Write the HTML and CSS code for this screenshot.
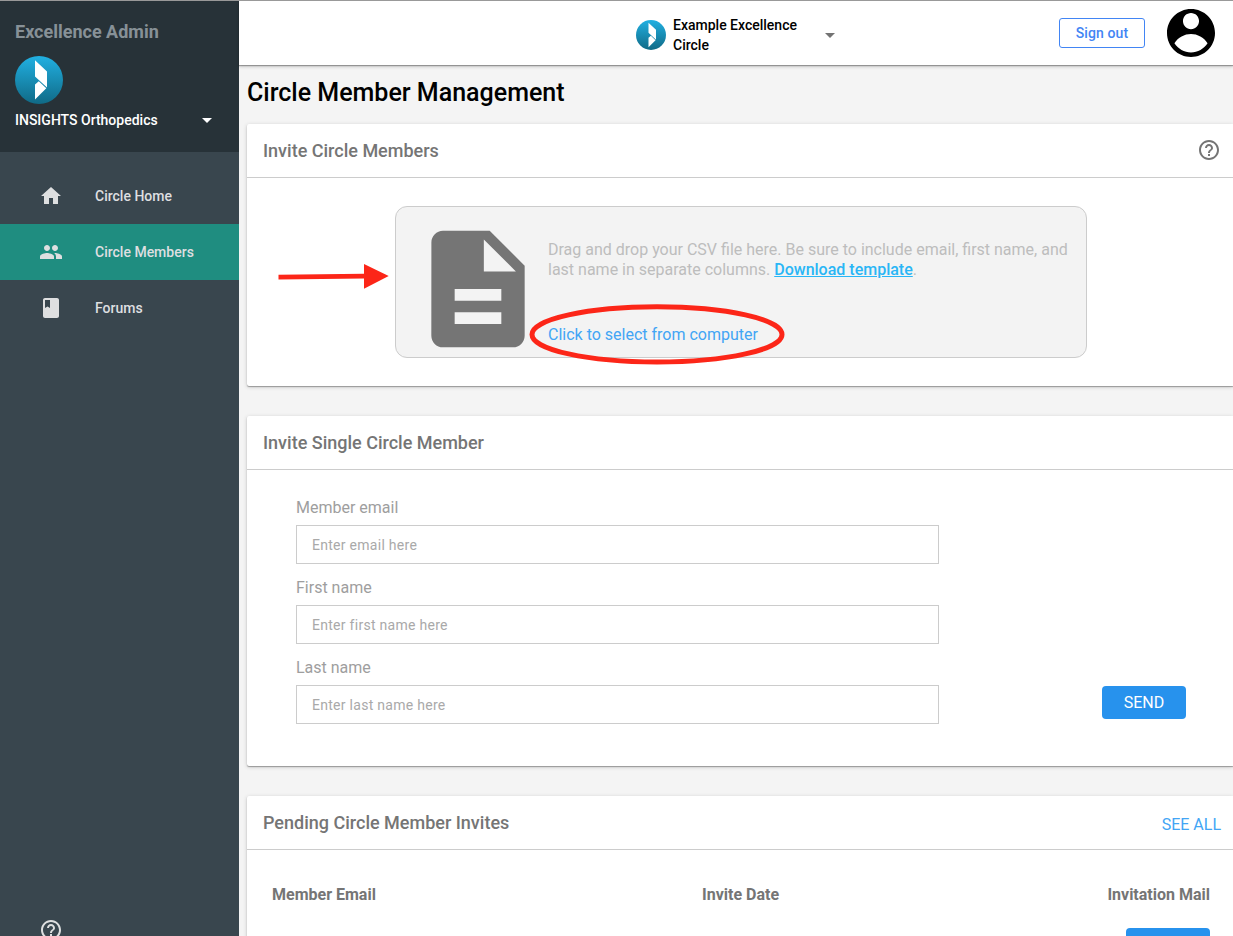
FILE: index.html
```html
<!DOCTYPE html>
<html lang="en">
<head>
    <meta charset="UTF-8">
    <meta name="viewport" content="width=device-width, initial-scale=1.0">
    <title>Circle Member Management</title>
    <link rel="stylesheet" href="styles.css">
</head>
<body>
    <!-- Shared logo -->
    <svg class="defs" width="0" height="0">
        <defs>
            <linearGradient id="logo-fill" x1="0" y1="0" x2="0" y2="1">
                <stop offset="0" stop-color="#21b0e2"/>
                <stop offset="1" stop-color="#106a86"/>
            </linearGradient>
            <symbol id="logo" viewBox="0 0 48 48">
                <circle cx="24" cy="24" r="24" fill="url(#logo-fill)"/>
                <path fill="#fff" d="M20 4.300L32 15.500V31.500L20 20.500zM23.800 25.200L31.300 32.300L20 43.500V28.500z"/>
            </symbol>
            <symbol id="help" viewBox="0 0 24 24">
                <path d="M11 18h2v-2h-2v2zm1-16C6.480 2 2 6.480 2 12s4.480 10 10 10 10-4.480 10-10S17.520 2 12 2zm0 18c-4.410 0-8-3.590-8-8s3.590-8 8-8 8 3.590 8 8-3.590 8-8 8zm0-14c-2.210 0-4 1.790-4 4h2c0-1.100.9-2 2-2s2 .9 2 2c0 2-3 1.750-3 5h2c0-2.250 3-2.500 3-5 0-2.210-1.790-4-4-4z"/>
            </symbol>
        </defs>
    </svg>

    <div class="app">
        <aside class="sidebar">
            <div class="sidebar-header">
                <div class="sidebar-title">Excellence Admin</div>
                <svg class="sidebar-logo"><use href="#logo"/></svg>
                <div class="org-select">
                    <span>INSIGHTS Orthopedics</span>
                    <span class="caret"></span>
                </div>
            </div>
            <nav class="nav">
                <a class="nav-item">
                    <svg viewBox="0 0 24 24"><path d="M10 20v-6h4v6h5v-8h3L12 3 2 12h3v8z"/></svg>
                    <span>Circle Home</span>
                </a>
                <a class="nav-item active">
                    <svg viewBox="0 0 24 24"><path d="M16 11c1.660 0 2.990-1.340 2.990-3S17.660 5 16 5c-1.660 0-3 1.340-3 3s1.340 3 3 3zm-8 0c1.660 0 2.990-1.340 2.990-3S9.660 5 8 5C6.340 5 5 6.340 5 8s1.340 3 3 3zm0 2c-2.330 0-7 1.170-7 3.500V19h14v-2.500c0-2.330-4.670-3.500-7-3.500zm8 0c-.29 0-.62.020-.97.050 1.160.84 1.970 1.970 1.970 3.450V19h6v-2.500c0-2.330-4.670-3.500-7-3.500z"/></svg>
                    <span>Circle Members</span>
                </a>
                <a class="nav-item">
                    <svg viewBox="0 0 24 24"><path d="M18 2H6c-1.100 0-2 .9-2 2v16c0 1.100.9 2 2 2h12c1.100 0 2-.9 2-2V4c0-1.100-.9-2-2-2zM6 4h5v8l-2.500-1.500L6 12V4z"/></svg>
                    <span>Forums</span>
                </a>
            </nav>
            <svg class="sidebar-help"><use href="#help"/></svg>
        </aside>

        <div class="content">
            <header class="topbar">
                <div class="circle-select">
                    <svg class="circle-logo"><use href="#logo"/></svg>
                    <span class="circle-name">Example Excellence Circle</span>
                    <span class="caret"></span>
                </div>
                <button type="button" class="sign-out">Sign out</button>
                <svg class="avatar" viewBox="2 2 20 20"><path d="M12 2C6.480 2 2 6.480 2 12s4.480 10 10 10 10-4.480 10-10S17.520 2 12 2zm0 1.700c1.850 0 3.350 1.500 3.350 3.350S13.850 10.400 12 10.400 8.650 8.900 8.650 7.050 10.150 3.700 12 3.700zm0 16.400c-2.800 0-5.400-1.500-6.900-3.800C6.600 13.800 9.300 12.400 12 12.400s5.400 1.400 6.900 3.900c-1.500 2.300-4.100 3.800-6.900 3.800z"/></svg>
            </header>

            <main>
                <h1>Circle Member Management</h1>

                <section class="card card-upload">
                    <div class="card-header">
                        <h2>Invite Circle Members</h2>
                        <svg class="card-help"><use href="#help"/></svg>
                    </div>
                    <div class="dropzone">
                        <svg class="file-icon" viewBox="0 0 24 24"><path d="M14 2H6c-1.100 0-1.990.9-1.990 2L4 20c0 1.100.89 2 1.990 2H18c1.100 0 2-.9 2-2V8l-6-6zm2 16H8v-2h8v2zm0-4H8v-2h8v2zm-3-5V3.500L18.500 9H13z"/></svg>
                        <div class="dropzone-text">
                            <p>Drag and drop your CSV file here. Be sure to include email, first name, and last name in separate columns. <a class="template-link">Download template</a>.</p>
                            <a class="select-link">Click to select from computer</a>
                        </div>
                        <svg class="mark-arrow" viewBox="0 0 112 28">
                            <path d="M0.500 12.700L86 11.700V2L110.700 14L86 26.700V16.500L0.500 17.500z"/>
                        </svg>
                        <svg class="mark-ellipse" viewBox="0 0 258 62">
                            <ellipse cx="129" cy="31.400" rx="125" ry="27.600"/>
                        </svg>
                    </div>
                </section>

                <section class="card card-single">
                    <div class="card-header">
                        <h2>Invite Single Circle Member</h2>
                    </div>
                    <form class="invite-form">
                        <div class="fields">
                            <label for="email">Member email</label>
                            <input type="text" id="email" placeholder="Enter email here">
                            <label for="first-name">First name</label>
                            <input type="text" id="first-name" placeholder="Enter first name here">
                            <label for="last-name">Last name</label>
                            <input type="text" id="last-name" placeholder="Enter last name here">
                        </div>
                        <button type="button" class="btn">SEND</button>
                    </form>
                </section>

                <section class="card card-pending">
                    <div class="card-header">
                        <h2>Pending Circle Member Invites</h2>
                        <a class="see-all">SEE ALL</a>
                    </div>
                    <div class="invites">
                        <div class="invites-head">
                            <span>Member Email</span>
                            <span>Invite Date</span>
                            <span class="mail">Invitation Mail</span>
                        </div>
                        <button type="button" class="btn"></button>
                    </div>
                </section>
            </main>
        </div>
    </div>
</body>
</html>
```
FILE: styles.css
```css
* {
    box-sizing: border-box;
}

body {
    margin: 0;
    font-family: Roboto, sans-serif;
    font-size: 16px;
    color: #000;
    background-color: #f4f4f4;
    overflow: hidden;
}

.defs {
    display: block;
}

.app {
    display: flex;
    height: 936px;
    border-top: 1px solid #999;
    overflow: hidden;
}

.caret {
    border: 5px solid transparent;
    border-top-color: currentColor;
    border-bottom: 0;
}

/* Sidebar */
.sidebar {
    flex: 0 0 239px;
    display: flex;
    flex-direction: column;
    background-color: #39464e;
    color: #dedfe0;
}

.sidebar-header {
    height: 151px;
    padding: 20px 27px 0 15px;
    background-color: #273238;
    color: #fff;
}

.sidebar-title {
    font-size: 18px;
    line-height: 22px;
    font-weight: 700;
    color: #879197;
}

.sidebar-logo {
    display: block;
    width: 48px;
    height: 48px;
    margin-top: 13px;
}

.org-select {
    display: flex;
    align-items: center;
    justify-content: space-between;
    height: 32px;
    font-size: 14px;
    font-weight: 500;
}

.nav {
    flex: 1;
    padding-top: 16px;
}

.nav-item {
    display: flex;
    align-items: center;
    gap: 32px;
    height: 56px;
    padding-left: 39px;
    font-size: 14px;
    font-weight: 500;
}

.nav-item svg {
    width: 24px;
    height: 24px;
    fill: currentColor;
}

.nav-item.active {
    background-color: #1f8d80;
}

.sidebar-help {
    width: 24px;
    height: 24px;
    margin: 0 0 -6px 39px;
    fill: #dedfe0;
    flex: none;
}

/* Top bar */
.content {
    flex: 1;
    min-width: 0;
}

.topbar {
    position: relative;
    display: flex;
    align-items: center;
    height: 64px;
    padding-right: 18px;
    background-color: #fff;
    box-shadow: 0 1px 1px rgba(0, 0, 0, 0.3), 0 2px 3px rgba(0, 0, 0, 0.16);
}

.circle-select {
    display: flex;
    align-items: center;
    width: 199px;
    margin: 4px auto 0 397px;
    color: #737373;
}

.circle-logo {
    width: 30px;
    height: 30px;
    margin-right: 7px;
    flex: none;
}

.circle-name {
    width: 152px;
    padding-right: 20px;
    font-size: 14px;
    line-height: 20px;
    font-weight: 500;
    color: #000;
}

.sign-out {
    width: 86px;
    height: 30px;
    margin-right: 22px;
    padding: 0;
    border: 1px solid #4285f4;
    border-radius: 3px;
    background-color: #fff;
    color: #4285f4;
    font: 500 14px Roboto, sans-serif;
    letter-spacing: 0.1px;
}

.avatar {
    width: 48px;
    height: 48px;
}

/* Cards */
main {
    padding-left: 8px;
}

h1 {
    margin: 0;
    height: 59px;
    padding-top: 13px;
    font-size: 25px;
    line-height: 30px;
    font-weight: 500;
}

.card {
    margin-bottom: 30px;
    background-color: #fff;
    border-radius: 2px 0 0 2px;
    box-shadow: 0 1px 1px rgba(0, 0, 0, 0.3), 0 1px 4px rgba(0, 0, 0, 0.18);
}

.card-upload {
    height: 262px;
}

.card-single {
    height: 350px;
}

.card-pending {
    height: 300px;
}

.card-header {
    display: flex;
    align-items: center;
    justify-content: space-between;
    height: 54px;
    padding: 0 12px 0 16px;
    border-bottom: 1px solid #ccc;
}

h2 {
    margin: 0;
    font-size: 18px;
    font-weight: 500;
    color: #757575;
}

.card-help {
    width: 24px;
    height: 24px;
    margin-bottom: 1px;
    fill: #757575;
}

/* File upload */
.dropzone {
    position: relative;
    display: flex;
    width: 692px;
    height: 152px;
    margin: 28px 0 0 148px;
    padding: 12px;
    border: 1px solid #ccc;
    border-radius: 12px;
    background-color: #f3f3f3;
}

.file-icon {
    width: 140px;
    height: 140px;
    flex: none;
    fill: #757575;
}

.dropzone-text {
    padding-top: 21px;
    line-height: 20px;
    color: #bdbdbd;
}

.dropzone-text p {
    width: 525px;
    margin: 0 0 45px;
}

.template-link {
    color: #29b6f6;
    font-weight: 500;
    text-decoration: underline;
}

.select-link {
    color: #42a5f5;
}

/* Marks drawn over the card */
.mark-arrow {
    position: absolute;
    left: -118px;
    top: 55px;
    width: 112px;
    height: 28px;
    fill: #fc2618;
}

.mark-ellipse {
    position: absolute;
    left: 132px;
    top: 96px;
    width: 258px;
    height: 62px;
    fill: none;
    stroke: #fc2618;
    stroke-width: 5;
}

/* Single invite form */
.invite-form {
    display: flex;
    align-items: flex-end;
    justify-content: space-between;
    padding: 27px 47px 0 49px;
}

.fields {
    width: 643px;
}

.fields label {
    display: block;
    height: 28px;
    padding-top: 1px;
    line-height: 20px;
    color: #9e9e9e;
}

.fields input {
    display: block;
    width: 100%;
    height: 39px;
    margin-bottom: 13px;
    padding: 0 15px;
    border: 1px solid #ccc;
    font: 14px Roboto, sans-serif;
    letter-spacing: 0.28px;
}

.fields input::placeholder {
    color: #a9a9a9;
}

.btn {
    width: 84px;
    height: 33px;
    padding: 0;
    border: none;
    border-radius: 4px;
    background-color: #2792ed;
    color: #fff;
    font: 16px Roboto, sans-serif;
}

.invite-form .btn {
    margin-bottom: 18px;
}

/* Pending invites */
.see-all {
    margin-top: 3px;
    color: #42a5f5;
}

.invites {
    padding: 35px 23px 0 25px;
}

.invites-head {
    display: grid;
    grid-template-columns: 430px 1fr auto;
    height: 43px;
    line-height: 20px;
    font-weight: 700;
    color: #757575;
}

.invites .btn {
    display: block;
    margin-left: auto;
}
```
